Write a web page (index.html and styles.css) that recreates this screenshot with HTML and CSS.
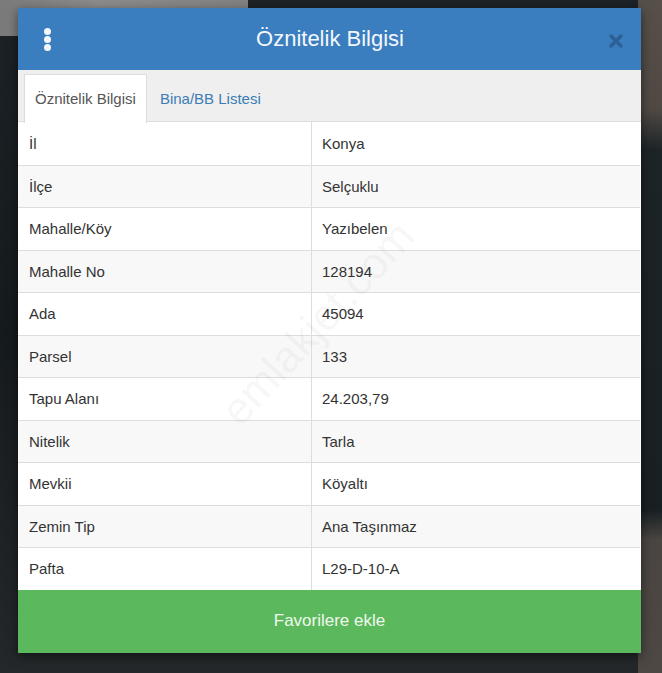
FILE: index.html
```html
<!DOCTYPE html>
<html lang="tr">
  <head>
    <meta charset="UTF-8" />
    <meta name="viewport" content="width=device-width, initial-scale=1.0" />
    <title>Öznitelik Bilgisi</title>
    <link rel="stylesheet" href="styles.css">
  </head>
  <body>
    <div class="backdrop">
      <div class="strip"></div>
      <div class="modal">
        <div class="modal-header">
          <span class="kebab"><i></i><i></i><i></i></span>
          <h2 class="modal-title">Öznitelik Bilgisi</h2>
          <span class="close-btn">
            <svg width="16" height="16" viewBox="0 0 16 16">
              <path d="M3 3 L13 13 M13 3 L3 13" stroke="#2c5f93" stroke-width="3.4" stroke-linecap="round" />
            </svg>
          </span>
        </div>

        <ul class="tabs">
          <li class="tab active">Öznitelik Bilgisi</li>
          <li class="tab">Bina/BB Listesi</li>
        </ul>

        <div class="table-wrap">
          <table class="info-table">
            <tr><td>İl</td><td>Konya</td></tr>
            <tr><td>İlçe</td><td>Selçuklu</td></tr>
            <tr><td>Mahalle/Köy</td><td>Yazıbelen</td></tr>
            <tr><td>Mahalle No</td><td>128194</td></tr>
            <tr><td>Ada</td><td>45094</td></tr>
            <tr><td>Parsel</td><td>133</td></tr>
            <tr><td>Tapu Alanı</td><td>24.203,79</td></tr>
            <tr><td>Nitelik</td><td>Tarla</td></tr>
            <tr><td>Mevkii</td><td>Köyaltı</td></tr>
            <tr><td>Zemin Tip</td><td>Ana Taşınmaz</td></tr>
            <tr><td>Pafta</td><td>L29-D-10-A</td></tr>
          </table>
          <span class="watermark">emlakjet.com</span>
        </div>

        <button class="fav-btn">Favorilere ekle</button>
      </div>
    </div>
  </body>
</html>
```

FILE: styles.css
```css
/* modal over a dark map-like background */
body {
  margin: 0;
  padding: 0;
  font-family: "Liberation Sans", Arial, sans-serif;
  background-color: #1b2024;
  background-image:
    linear-gradient(180deg, #57504a 0, #4f4843 110px, #1d2428 150px, #182024 510px, #4a4541 540px, #4d4844 100%),
    linear-gradient(180deg, #1c2226 0, #151a1d 50%, #24282a 100%);
  background-size: 24px 100%, 100% 100%;
  background-position: right top, left top;
  background-repeat: no-repeat;
  min-height: 673px;
}

.backdrop {
  position: relative;
  padding: 8px 21px 0 18px;
  height: 665px;
}

.strip {
  position: absolute;
  left: 0;
  top: 0;
  width: 248px;
  height: 36px;
  background: linear-gradient(90deg, #7a7a7a, #8c8c8c 40%, #828282);
}

.modal {
  position: relative;
  width: 623px;
  background-color: #fff;
  box-shadow: 0 3px 10px rgba(0, 0, 0, 0.5);
}

.modal-header {
  display: flex;
  align-items: center;
  height: 62px;
  padding: 0 17px 0 26px;
  background-color: #3a7ec0;
}

.kebab {
  display: flex;
  flex-direction: column;
  gap: 1px;
  width: 8px;
}

.kebab i {
  display: block;
  width: 7px;
  height: 7px;
  border-radius: 50%;
  background-color: #f2f6fb;
}

.modal-title {
  flex: 1;
  margin: 0;
  text-align: center;
  font-size: 22px;
  font-weight: normal;
  color: #f4f7fb;
}

.close-btn {
  display: flex;
  width: 16px;
  height: 16px;
  margin-top: 3px;
}

.tabs {
  display: flex;
  margin: 0;
  padding: 4px 0 0 6px;
  list-style-type: none;
  background-color: #efefef;
  border-bottom: 1px solid #ddd;
  height: 47px;
}

.tab {
  padding: 0 10px;
  margin-right: 2px;
  line-height: 47px;
  font-size: 15px;
  color: #3b7db5;
  border: 1px solid transparent;
  border-bottom: none;
}

.tab.active {
  color: #555;
  background-color: #fff;
  border-color: #ddd;
  height: 48px;
}

.table-wrap {
  position: relative;
  overflow: hidden;
  padding-right: 1px;
}

.info-table {
  width: 100%;
  border-collapse: collapse;
  font-size: 15px;
  color: #333;
}

.info-table td {
  padding: 11px 10px 11px 11px;
  line-height: 19.5px;
  border-top: 1px solid #ddd;
}

.info-table tr:first-child td {
  border-top: none;
  padding-top: 12px;
}

.info-table td:first-child {
  width: 272px;
  border-right: 1px solid #ddd;
}

.info-table td:last-child {
  padding-left: 10px;
}

.info-table tr:nth-child(even) td {
  background-color: #f8f8f8;
}

.watermark {
  position: absolute;
  left: 170px;
  top: 176px;
  font-size: 44px;
  color: rgba(0, 0, 0, 0.05);
  transform: rotate(-47deg);
  pointer-events: none;
  white-space: nowrap;
}

.fav-btn {
  display: block;
  width: 100%;
  height: 63px;
  border: none;
  background-color: #5cb85c;
  color: #eef8ec;
  font-family: "Liberation Sans", Arial, sans-serif;
  font-size: 17px;
  cursor: pointer;
}
```
